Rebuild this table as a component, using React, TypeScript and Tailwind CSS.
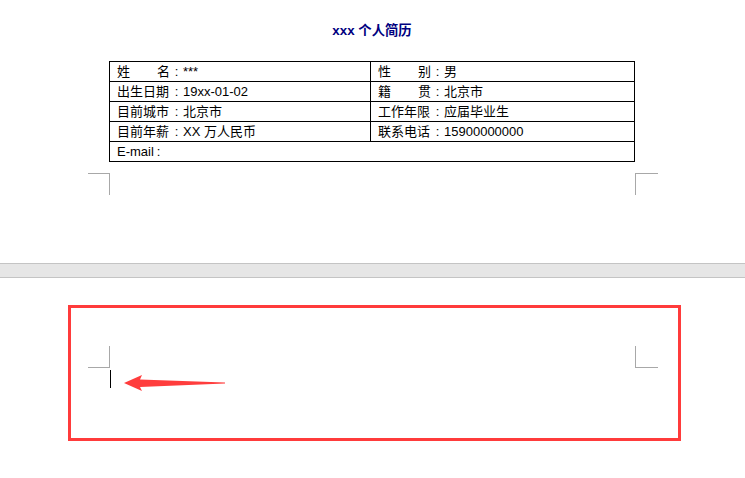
const FONT = "font-['Liberation_Sans','Noto_Sans_CJK_SC',sans-serif]";

interface Field {
  label: string[];
  value: string;
}

const ROWS: [Field, Field][] = [
  [
    { label: ["姓", "名"], value: "***" },
    { label: ["性", "别"], value: "男" },
  ],
  [
    { label: ["出生日期"], value: "19xx-01-02" },
    { label: ["籍", "贯"], value: "北京市" },
  ],
  [
    { label: ["目前城市"], value: "北京市" },
    { label: ["工作年限"], value: "应届毕业生" },
  ],
  [
    { label: ["目前年薪"], value: "XX 万人民币" },
    { label: ["联系电话"], value: "15900000000" },
  ],
];

function Cell({ field, last }: { field: Field; last?: boolean }) {
  return (
    <div
      className={
        "flex h-full items-center whitespace-nowrap pl-[7px] " +
        (last ? "flex-1" : "w-[261px] border-r border-black")
      }
    >
      <span className="flex w-[53px] shrink-0 justify-between">
        {field.label.map((l) => (
          <span key={l}>{l}</span>
        ))}
      </span>
      <span className="w-[13px] shrink-0 text-center">:</span>
      <span>{field.value}</span>
    </div>
  );
}

function Mark({ side, pos }: { side: "left" | "right"; pos: "top" | "bottom" }) {
  const edge = pos === "top" ? "border-t" : "border-b";
  const vert = side === "left" ? "border-r" : "border-l";
  return (
    <div
      className={
        "h-[22px] border-[#a8a8a8] " +
        edge +
        " " +
        vert +
        (side === "left" ? " w-[22px]" : " w-[23px]")
      }
    />
  );
}

export default function App() {
  return (
    <div
      className={
        "relative h-[478px] w-[745px] overflow-hidden bg-white text-[13px] text-black " +
        FONT
      }
    >
      {/* page 1 */}
      <div className="h-[263px] pt-[23px]">
        <div className="ml-[109px] w-[526px] text-center text-[13.33px] font-bold leading-[16px] text-[#000080]">
          xxx 个人简历
        </div>
        <div className="ml-[109px] mt-[22px] w-[526px] border border-black leading-none">
          {ROWS.map(([a, b], i) => (
            <div key={i} className="flex h-[20px] border-b border-black">
              <Cell field={a} />
              <Cell field={b} last />
            </div>
          ))}
          <div className="flex h-[19px] items-center pl-[7px]">
            <span>E-mail</span>
            <span className="ml-[3px]">:</span>
          </div>
        </div>
        <div className="mt-[11px] flex">
          <div className="ml-[88px]">
            <Mark side="left" pos="top" />
          </div>
          <div className="ml-[525px]">
            <Mark side="right" pos="top" />
          </div>
        </div>
      </div>

      {/* page gap */}
      <div className="h-[15px] border-y border-[#c4c4c4] bg-[#e6e6e6]" />

      {/* page 2 */}
      <div className="pt-[68px]">
        <div className="flex">
          <div className="ml-[88px]">
            <Mark side="left" pos="bottom" />
          </div>
          <div className="ml-[525px]">
            <Mark side="right" pos="bottom" />
          </div>
        </div>
        <div className="ml-[110px] mt-[2px] h-[18px] w-px bg-black" />
      </div>

      {/* annotation */}
      <div className="absolute left-[68px] top-[305px] h-[136px] w-[613px] border-[3px] border-[#ff3b3b]" />
      <svg
        className="absolute left-0 top-0"
        width="745"
        height="478"
        viewBox="0 0 745 478"
      >
        <polygon
          points="124,383 142,375 140,379.5 225,382.4 225,383.6 140,387 142,391"
          fill="#ff3d3d"
        />
      </svg>
    </div>
  );
}
